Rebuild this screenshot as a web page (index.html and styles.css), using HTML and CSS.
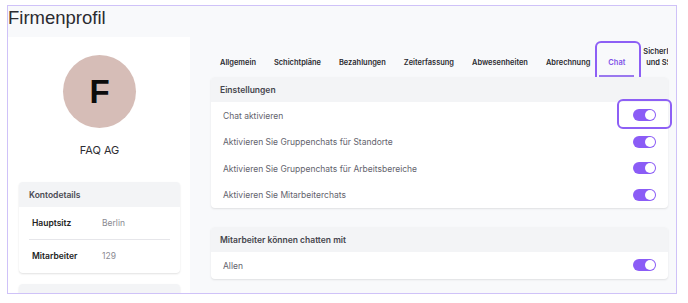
FILE: index.html
```html
<!DOCTYPE html>
<html lang="de">
<head>
<meta charset="UTF-8" />
<title>Firmenprofil</title>
<link rel="stylesheet" href="styles.css">
</head>
<body>
<div class="frame">
  <h1 class="title">Firmenprofil</h1>
  <div class="main">
    <aside class="profile">
      <div class="avatar">F</div>
      <div class="company">FAQ AG</div>

      <div class="box">
        <div class="box-head">Kontodetails</div>
        <div class="box-body">
          <div class="detail">
            <span class="detail-label">Hauptsitz</span>
            <span class="detail-value">Berlin</span>
          </div>
          <div class="detail">
            <span class="detail-label">Mitarbeiter</span>
            <span class="detail-value">129</span>
          </div>
        </div>
      </div>

      <div class="box box-next">
        <div class="box-head">Rechnungsdetails</div>
      </div>
    </aside>

    <section class="settings">
      <nav class="tabs">
        <div class="tab">Allgemein</div>
        <div class="tab">Schichtpläne</div>
        <div class="tab">Bezahlungen</div>
        <div class="tab">Zeiterfassung</div>
        <div class="tab">Abwesenheiten</div>
        <div class="tab">Abrechnung</div>
        <div class="tab active">Chat<span class="mark mark-tab"></span></div>
        <div class="tab tab-wrap">Sicherheit und SSO</div>
      </nav>

      <div class="card">
        <div class="card-head">Einstellungen</div>
        <div class="option">
          <span>Chat aktivieren</span>
          <span class="switch"><span class="mark mark-switch"></span></span>
        </div>
        <div class="option">
          <span>Aktivieren Sie Gruppenchats für Standorte</span>
          <span class="switch"></span>
        </div>
        <div class="option">
          <span>Aktivieren Sie Gruppenchats für Arbeitsbereiche</span>
          <span class="switch"></span>
        </div>
        <div class="option">
          <span>Aktivieren Sie Mitarbeiterchats</span>
          <span class="switch"></span>
        </div>
      </div>

      <div class="card card-second">
        <div class="card-head">Mitarbeiter können chatten mit</div>
        <div class="option">
          <span>Allen</span>
          <span class="switch"></span>
        </div>
      </div>
    </section>
  </div>
</div>
</body>
</html>
```

FILE: styles.css
```css
* {
  box-sizing: border-box;
}
body {
  margin: 0;
  background: #fff;
  font-family: Inter, "Noto Sans", sans-serif;
}
.frame {
  margin: 5px 0 0 7px;
  width: 670px;
  height: 289px;
  border: 1px solid #cfc2f8;
  background: #f8f9fb;
  overflow: hidden;
}
.title {
  margin: 0;
  height: 31px;
  padding-top: 1px;
  font-family: "Liberation Sans", Arial, sans-serif;
  font-weight: 400;
  font-size: 18.5px;
  line-height: 22px;
  color: #2b2b30;
}
.main {
  display: flex;
  height: 256px;
}

/* left column */
.profile {
  flex-shrink: 0;
  width: 182px;
  background: #fff;
  padding: 18px 10px 0 11px;
}
.avatar {
  width: 73px;
  height: 73px;
  margin-left: 44px;
  border-radius: 50%;
  background: #d6bdb7;
  color: #0c0c0c;
  font-family: "Liberation Sans", Arial, sans-serif;
  font-weight: 700;
  font-size: 33px;
  display: flex;
  align-items: center;
  justify-content: center;
}
.company {
  margin-top: 14px;
  text-align: center;
  font-size: 11px;
  line-height: 16px;
  color: #2e2e33;
}
.box {
  margin-top: 24px;
  background: #fff;
  border-radius: 4px;
  box-shadow: 0 1px 2px rgba(0, 0, 0, 0.12);
  overflow: hidden;
}
.box-next {
  margin-top: 11px;
}
.box-head {
  height: 25px;
  padding-left: 10px;
  background: #f3f4f6;
  display: flex;
  align-items: center;
  font-size: 8.5px;
  font-weight: 600;
  color: #4a4a52;
}
.box-body {
  padding: 0 10px 1px;
}
.detail {
  display: flex;
  align-items: center;
  height: 32px;
  padding-left: 3px;
  font-size: 8.5px;
}
.detail + .detail {
  border-top: 1px solid #e6e6ea;
  height: 33px;
}
.detail-label {
  width: 70px;
  font-weight: 600;
  color: #222;
}
.detail-value {
  color: #8a8a92;
}

/* right column */
.settings {
  flex-shrink: 0;
  width: 457px;
  margin-left: 21px;
}
.tabs {
  height: 40px;
  display: flex;
  align-items: flex-end;
  overflow: hidden;
}
.tab {
  position: relative;
  flex-shrink: 0;
  padding: 0 9px 7px;
  border-bottom: 2px solid transparent;
  font-size: 7.45px;
  font-weight: 600;
  line-height: 11px;
  color: #2a2a2f;
  white-space: nowrap;
}
.tab.active {
  color: #7f52e8;
  border-bottom-color: #9a78ef;
}
.tab-wrap {
  white-space: normal;
  width: min-content;
  text-align: center;
}
.mark {
  position: absolute;
  border: 2px solid #8d5ff5;
  border-radius: 6px;
}
.mark-tab {
  left: -4px;
  right: -7px;
  top: -16px;
  bottom: -8px;
}
.card {
  background: #fff;
  border-radius: 4px;
  box-shadow: 0 1px 2px rgba(0, 0, 0, 0.1);
}
.card-second {
  margin-top: 19px;
}
.card-head {
  height: 25px;
  padding: 1px 0 0 9px;
  background: #f3f4f6;
  border-radius: 4px 4px 0 0;
  display: flex;
  align-items: center;
  font-size: 8.5px;
  font-weight: 600;
  color: #45454d;
}
.option {
  height: 26.5px;
  padding: 1px 12px 0;
  display: flex;
  align-items: center;
  justify-content: space-between;
  font-size: 8.5px;
  color: #63636d;
}
.switch {
  position: relative;
  margin-top: -1px;
  width: 23px;
  height: 12px;
  border-radius: 6px;
  background: #8b5cf6;
}
.switch::after {
  content: "";
  position: absolute;
  right: 1px;
  top: 1px;
  width: 10px;
  height: 10px;
  border-radius: 50%;
  background: #fff;
}
.mark-switch {
  left: -16px;
  right: -16px;
  top: -10px;
  bottom: -8px;
}
```
